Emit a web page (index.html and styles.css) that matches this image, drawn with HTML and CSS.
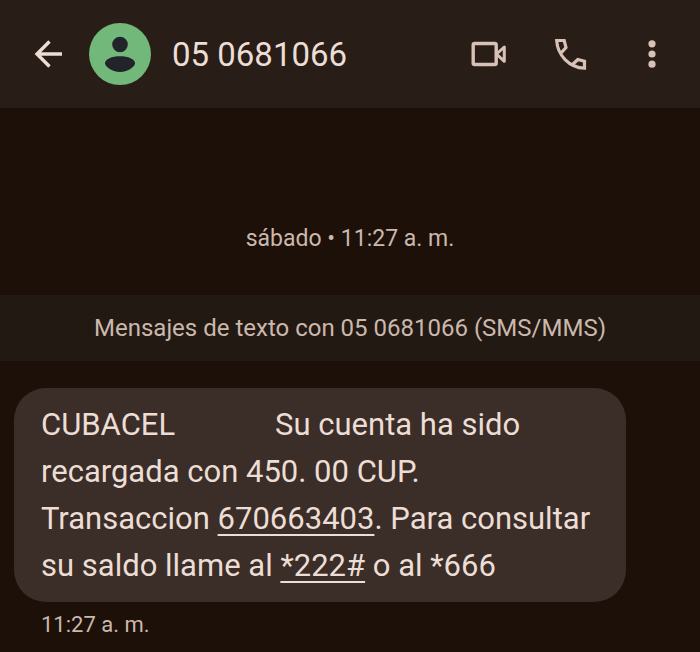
FILE: index.html
```html
<!DOCTYPE html>
<html lang="es">
<head>
    <meta charset="UTF-8">
    <meta name="viewport" content="width=device-width, initial-scale=1.0">
    <title>05 0681066</title>
    <link rel="stylesheet" href="styles.css">
</head>
<body>
    <!-- Top Bar -->
    <header class="top-bar">
        <button class="icon-button" aria-label="Atrás">
            <svg width="40" height="40" viewBox="0 0 40 40" fill="none" stroke="currentColor" stroke-width="3.4">
                <path d="M34 20H9M21.500 7.500L9 20L21.500 32.500"/>
            </svg>
        </button>
        <svg class="avatar" width="62" height="62" viewBox="0 0 62 62" aria-hidden="true">
            <circle cx="31" cy="31" r="31" fill="#72b87a"/>
            <circle cx="31" cy="21.5" r="7.8" fill="#22242a"/>
            <path d="M16 40.5C16 36 23 33.3 31 33.3S46 36 46 40.5C46 43 39.500 49 31 49S16 43 16 40.500Z" fill="#22242a"/>
        </svg>
        <h1 class="contact">05 0681066</h1>
        <div class="actions">
            <button class="icon-button" aria-label="Videollamada">
                <svg width="40" height="40" viewBox="0 0 40 40" fill="none" stroke="currentColor" stroke-width="3.4" stroke-linejoin="round">
                    <rect x="5.200" y="9.500" width="23" height="21" rx="1.500"/>
                    <path d="M28.500 20L36.300 13V27.300Z" stroke-width="3"/>
                </svg>
            </button>
            <button class="icon-button" aria-label="Llamar">
                <svg width="40" height="40" viewBox="0 0 40 40" fill="none" stroke="currentColor" stroke-width="3.2">
                    <path d="M6.700 6.500H14.200L16 13.500L11 19M6.700 5V6.500C7.500 21 19 33.500 34.500 34.200V27.200L27.800 25.500L22.500 30.500"/>
                </svg>
            </button>
            <button class="icon-button" aria-label="Más opciones">
                <svg width="40" height="40" viewBox="0 0 40 40" fill="currentColor">
                    <circle cx="20" cy="9.800" r="3.600"/>
                    <circle cx="20" cy="20" r="3.600"/>
                    <circle cx="20" cy="30.200" r="3.600"/>
                </svg>
            </button>
        </div>
    </header>

    <!-- Conversation -->
    <main>
        <p class="date">sábado • 11:27 a. m.</p>
        <p class="notice">Mensajes de texto con 05 0681066 (SMS/MMS)</p>
        <div class="message">
            <p class="bubble">CUBACEL             Su cuenta ha sido recargada con 450. 00 CUP.
Transaccion <a href="tel:670663403">670663403</a>. Para consultar su saldo llame al <a href="tel:*222%23">*222#</a> o al *666</p>
            <p class="time">11:27 a. m.</p>
        </div>
    </main>
</body>
</html>
```
FILE: styles.css
```css
/* Global Styles */
* {
    box-sizing: border-box;
}

body {
    margin: 0;
    background-color: #1c1008;
    color: #ecddd5;
    font-family: Roboto, sans-serif;
}

p, h1 {
    margin: 0;
}

/* Top Bar */
.top-bar {
    display: flex;
    align-items: center;
    height: 108px;
    padding: 0 28px;
    background-color: #291d17;
}

.icon-button {
    display: flex;
    padding: 0;
    border: none;
    background: none;
    color: inherit;
    cursor: pointer;
}

.avatar {
    margin-left: 21px;
}

.contact {
    margin-left: 21px;
    font-size: 33px;
    font-weight: 400;
}

.actions {
    display: flex;
    gap: 42px;
    margin-left: auto;
    color: #d8c2b7;
}

/* Date and Notice */
.date {
    padding: 116px 20px 41px;
    font-size: 23px;
    line-height: 30px;
    text-align: center;
    color: #cbb8ac;
}

.notice {
    padding: 18px 20px;
    background-color: #231913;
    font-size: 24px;
    line-height: 30px;
    text-align: center;
    color: #cbb8ac;
}

/* Message */
.message {
    padding: 27px 74px 12px 14px;
}

.bubble {
    padding: 13px 27px;
    border-radius: 32px;
    background-color: #3b2d28;
    font-size: 31px;
    line-height: 47px;
    white-space: pre-wrap;
}

.bubble a {
    color: inherit;
    text-decoration-thickness: 2px;
    text-underline-offset: 5px;
    text-decoration-skip-ink: none;
}

.time {
    padding: 8px 27px;
    font-size: 22px;
    line-height: 30px;
    color: #cbb8ac;
}
```
